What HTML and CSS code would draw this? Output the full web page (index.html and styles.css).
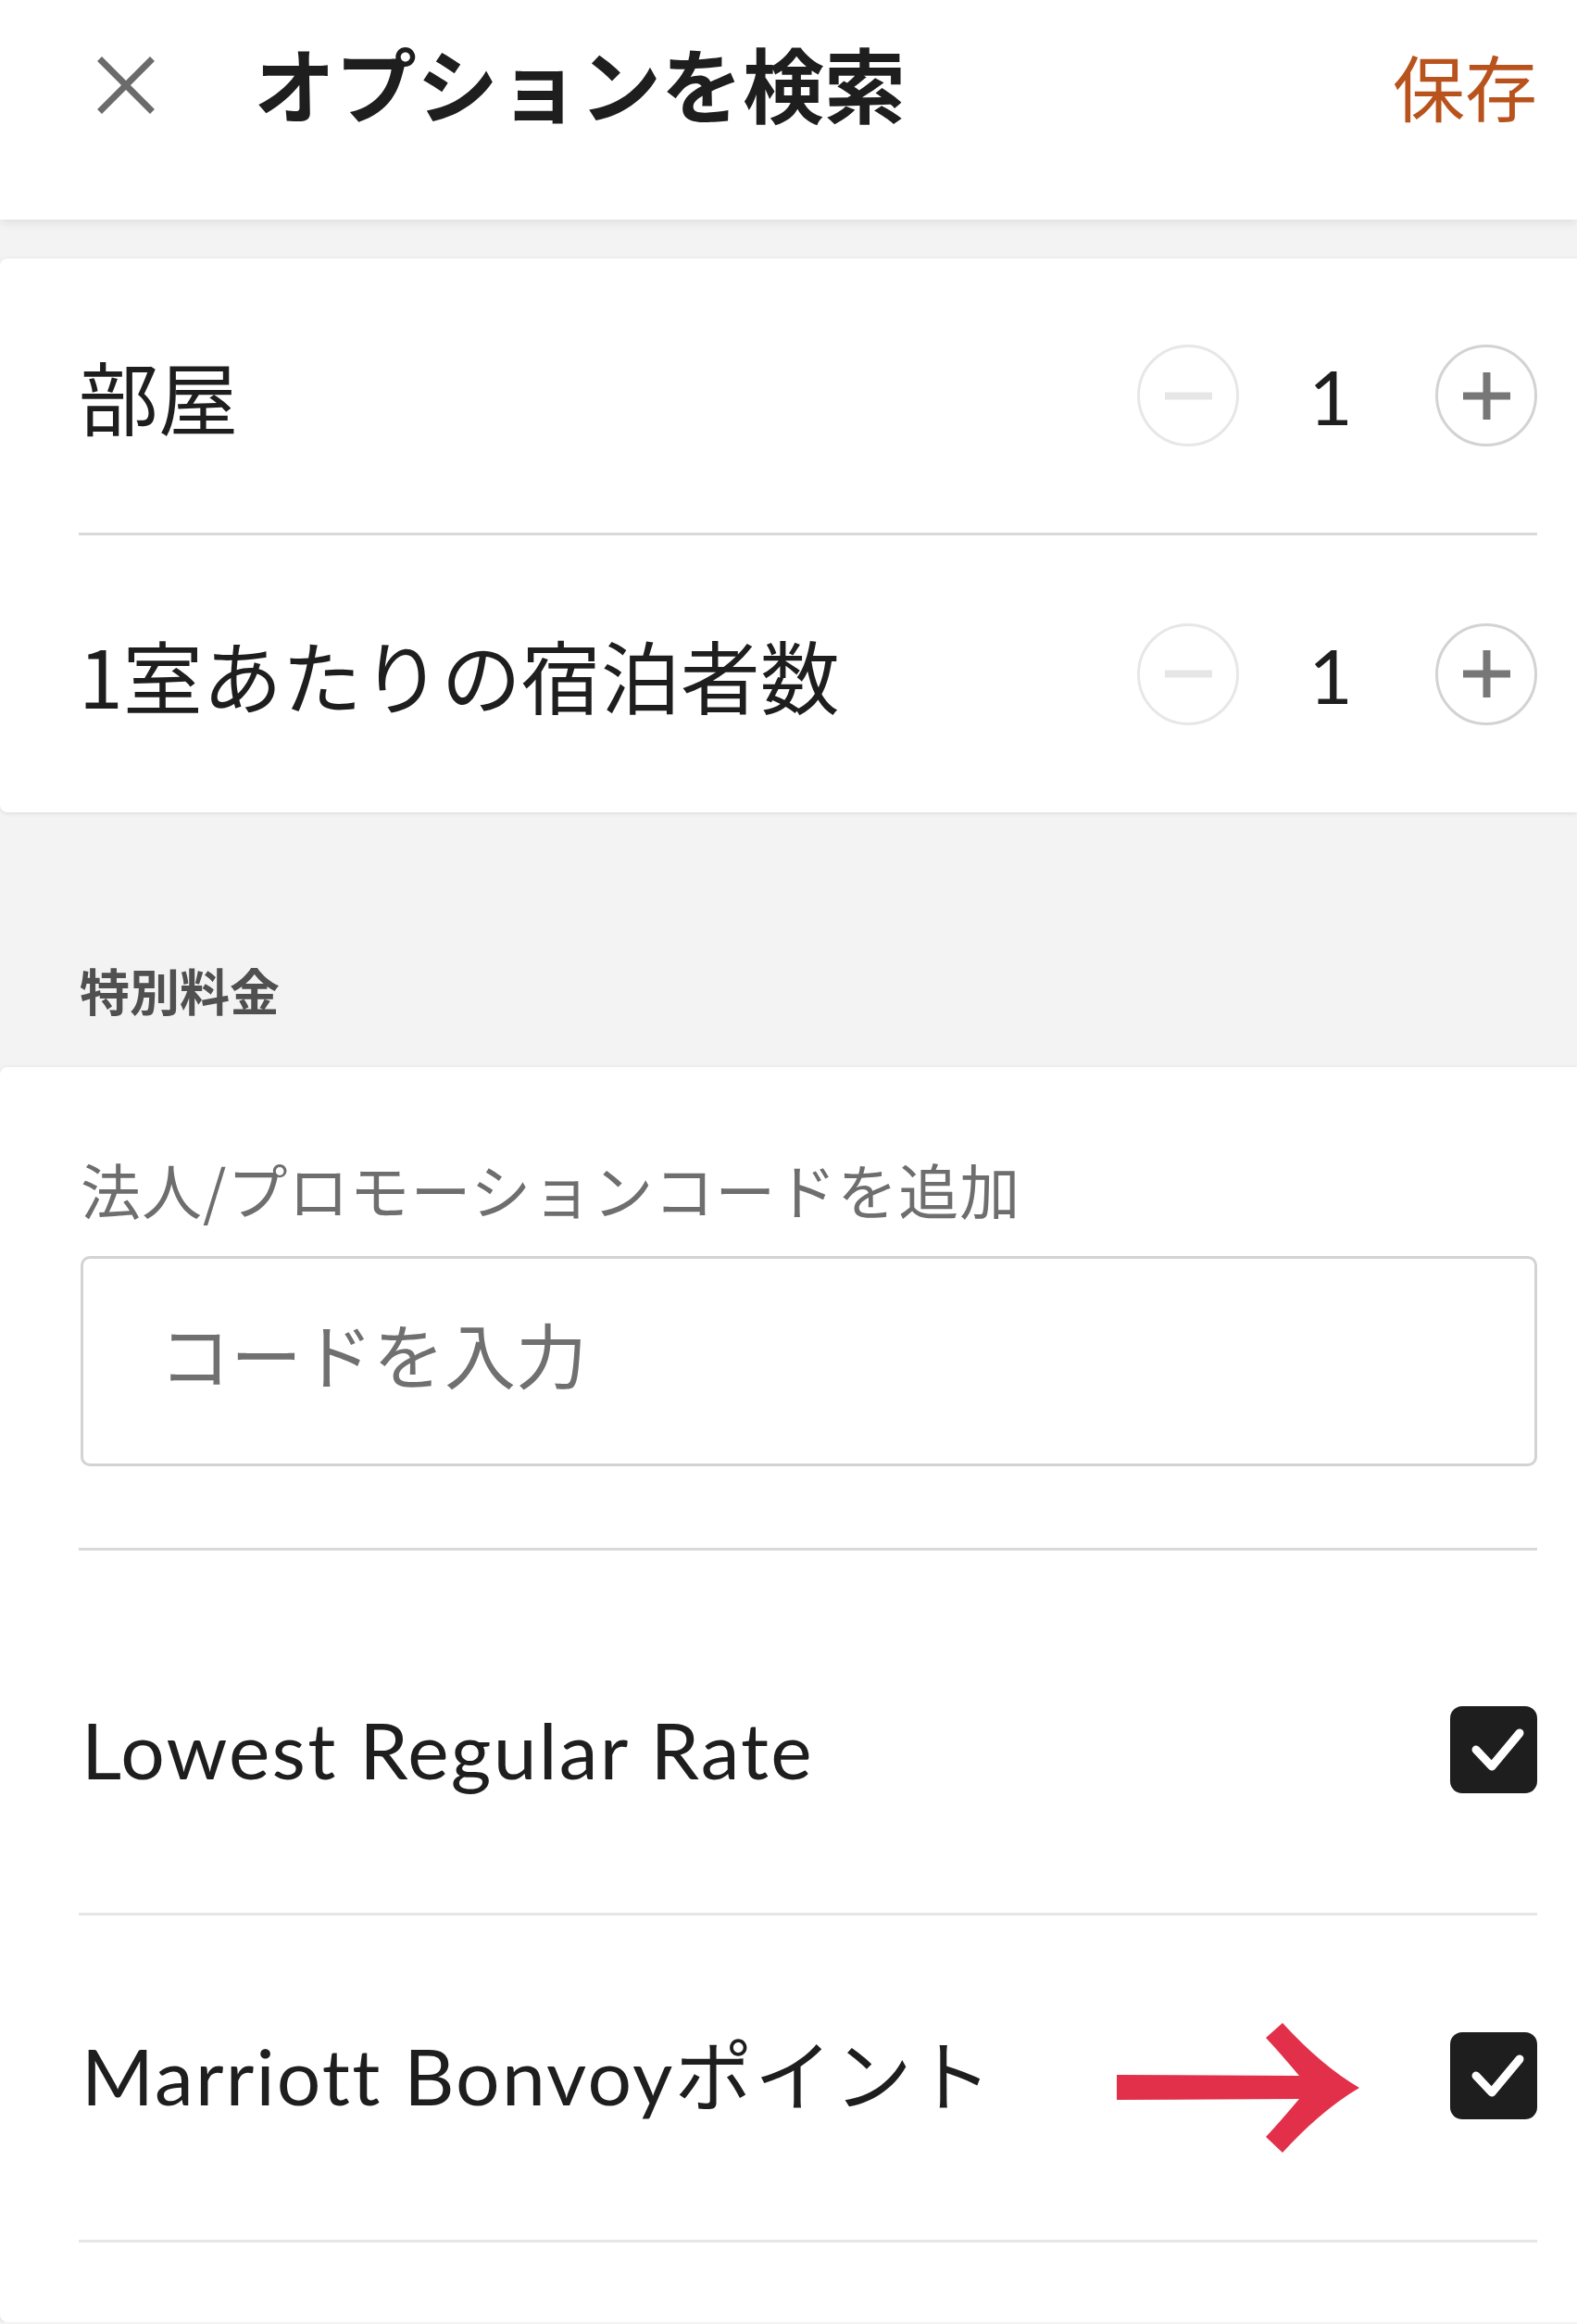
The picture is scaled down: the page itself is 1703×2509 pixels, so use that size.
FILE: index.html
```html
<!DOCTYPE html>
<html lang="ja">
<head>
<meta charset="utf-8">
<title>オプションを検索</title>
<link rel="stylesheet" href="styles.css">
</head>
<body>
<header class="topbar">
  <button class="close" aria-label="閉じる">
    <svg width="64" height="64" viewBox="0 0 64 64"><path d="M6 6 L58 58 M58 6 L6 58" stroke="#6b6b6b" stroke-width="7" stroke-linecap="square" fill="none"/></svg>
  </button>
  <h1 class="title">オプションを検索</h1>
  <span class="save">保存</span>
</header>

<main class="content">
  <section class="card card-guests">
    <div class="step-row step-row-first">
      <span class="step-label">部屋</span>
      <div class="stepper">
        <span class="step-btn step-btn-off"><svg width="51" height="51" viewBox="0 0 51 51"><rect x="0" y="21.5" width="51" height="8" fill="#e6e6e6"/></svg></span>
        <span class="step-value">1</span>
        <span class="step-btn"><svg width="51" height="51" viewBox="0 0 51 51"><rect x="0" y="21.5" width="51" height="8" fill="#777"/><rect x="21.5" y="0" width="8" height="51" fill="#777"/></svg></span>
      </div>
    </div>
    <div class="step-row">
      <span class="step-label">1室あたりの宿泊者数</span>
      <div class="stepper">
        <span class="step-btn step-btn-off"><svg width="51" height="51" viewBox="0 0 51 51"><rect x="0" y="21.5" width="51" height="8" fill="#e6e6e6"/></svg></span>
        <span class="step-value">1</span>
        <span class="step-btn"><svg width="51" height="51" viewBox="0 0 51 51"><rect x="0" y="21.5" width="51" height="8" fill="#777"/><rect x="21.5" y="0" width="8" height="51" fill="#777"/></svg></span>
      </div>
    </div>
  </section>

  <h2 class="section-title">特別料金</h2>

  <section class="card card-rates">
    <div class="code-block">
      <label class="code-label" for="code">法人/プロモーションコードを追加</label>
      <input class="code-input" id="code" type="text" placeholder="コードを入力">
    </div>
    <div class="check-row check-row-first">
      <span class="check-label">Lowest Regular Rate</span>
      <span class="checkbox"><svg width="94" height="94" viewBox="0 0 94 94"><polyline points="28,47 45,65 75,29" fill="none" stroke="#fff" stroke-width="9" stroke-linecap="round" stroke-linejoin="round"/></svg></span>
    </div>
    <div class="check-row">
      <span class="check-label">Marriott Bonvoyポイント</span>
      <svg class="annot-arrow" width="270" height="150" viewBox="0 0 270 150"><path d="M6 62 L203 63 Q182 38 167 22 L185 6 Q227 52 268 76 Q227 100 185 146 L167 129 Q182 113 203 88 L6 89 Z" fill="#e3304a"/></svg>
      <span class="checkbox"><svg width="94" height="94" viewBox="0 0 94 94"><polyline points="28,47 45,65 75,29" fill="none" stroke="#fff" stroke-width="9" stroke-linecap="round" stroke-linejoin="round"/></svg></span>
    </div>
  </section>
</main>
</body>
</html>
```

FILE: styles.css
```css
html, body {
  margin: 0;
  padding: 0;
}
body {
  background: #f3f3f3;
  font-family: "Noto Sans CJK JP", sans-serif;
  color: #1e1e1e;
  width: 1703px;
}

.topbar {
  position: relative;
  z-index: 2;
  height: 237px;
  box-sizing: border-box;
  padding: 0 43px 53px 104px;
  background: #fff;
  display: flex;
  align-items: center;
  box-shadow: 0 3px 10px rgba(0, 0, 0, 0.09);
}
.close {
  border: 0;
  padding: 0;
  margin: 0;
  background: none;
  width: 64px;
  height: 64px;
  display: block;
}
.close svg { display: block; }
.title {
  flex: 1;
  margin: 0 0 9px 106px;
  font-size: 88px;
  line-height: 1;
  font-weight: 700;
  color: #1e1e1e;
}
.save {
  font-size: 78px;
  line-height: 1;
  color: #b9531d;
}

.content {
  padding-top: 42px;
}

.card {
  background: #fff;
  border-radius: 8px 0 0 8px;
  padding: 0 43px 0 85px;
  box-shadow: 0 1px 5px rgba(0, 0, 0, 0.1);
}

.step-row {
  height: 299px;
  box-sizing: border-box;
  display: flex;
  align-items: center;
  justify-content: space-between;
}
.step-row-first {
  border-bottom: 3px solid #d9d9d9;
}
.step-label {
  font-size: 86px;
  line-height: 1;
}
.stepper {
  display: flex;
  align-items: center;
}
.step-btn {
  width: 110px;
  height: 110px;
  box-sizing: border-box;
  border: 3px solid #d3d3d3;
  border-radius: 50%;
  display: flex;
  align-items: center;
  justify-content: center;
}
.step-btn svg { display: block; }
.step-btn-off {
  border-color: #e7e7e7;
}
.step-value {
  width: 212px;
  text-align: center;
  font-family: "Lato", "Noto Sans CJK JP", sans-serif;
  font-size: 82px;
  line-height: 1;
  padding-right: 14px;
  box-sizing: border-box;
}

.section-title {
  margin: 0;
  height: 275px;
  box-sizing: border-box;
  padding: 165px 0 0 86px;
  font-size: 54px;
  line-height: 1;
  font-weight: 700;
  color: #505050;
}

.card-rates {
  padding-top: 99px;
  padding-bottom: 86px;
}
.code-block {
  display: flex;
  flex-direction: column;
  padding-bottom: 88px;
  border-bottom: 3px solid #d9d9d9;
}
.code-label {
  font-size: 65px;
  line-height: 1;
  letter-spacing: 1px;
  color: #6e6e6e;
  padding-left: 2px;
}
.code-input {
  margin: 40px 0 0 2px;
  height: 227px;
  box-sizing: border-box;
  border: 3px solid #d3d3d3;
  border-radius: 10px;
  padding: 0 0 18px 82px;
  font-family: "Noto Sans CJK JP", sans-serif;
  font-size: 77px;
  color: #1e1e1e;
  background: #fff;
  outline: none;
}
.code-input::placeholder {
  color: #707070;
}

.check-row {
  position: relative;
  display: flex;
  align-items: center;
  justify-content: space-between;
  padding: 126px 0 130px;
  border-bottom: 3px solid #e6e6e6;
}
.check-row-first {
  padding: 168px 0 129px;
}
.check-label {
  font-family: "Lato", "Noto Sans CJK JP", sans-serif;
  font-size: 84px;
  line-height: 1;
  letter-spacing: 2.2px;
  padding-left: 3px;
}
.checkbox {
  width: 94px;
  height: 94px;
  border-radius: 13px;
  background: #1e1e1e;
  display: block;
}
.checkbox svg { display: block; }
.annot-arrow {
  position: absolute;
  right: 190px;
  top: 110px;
}
```
